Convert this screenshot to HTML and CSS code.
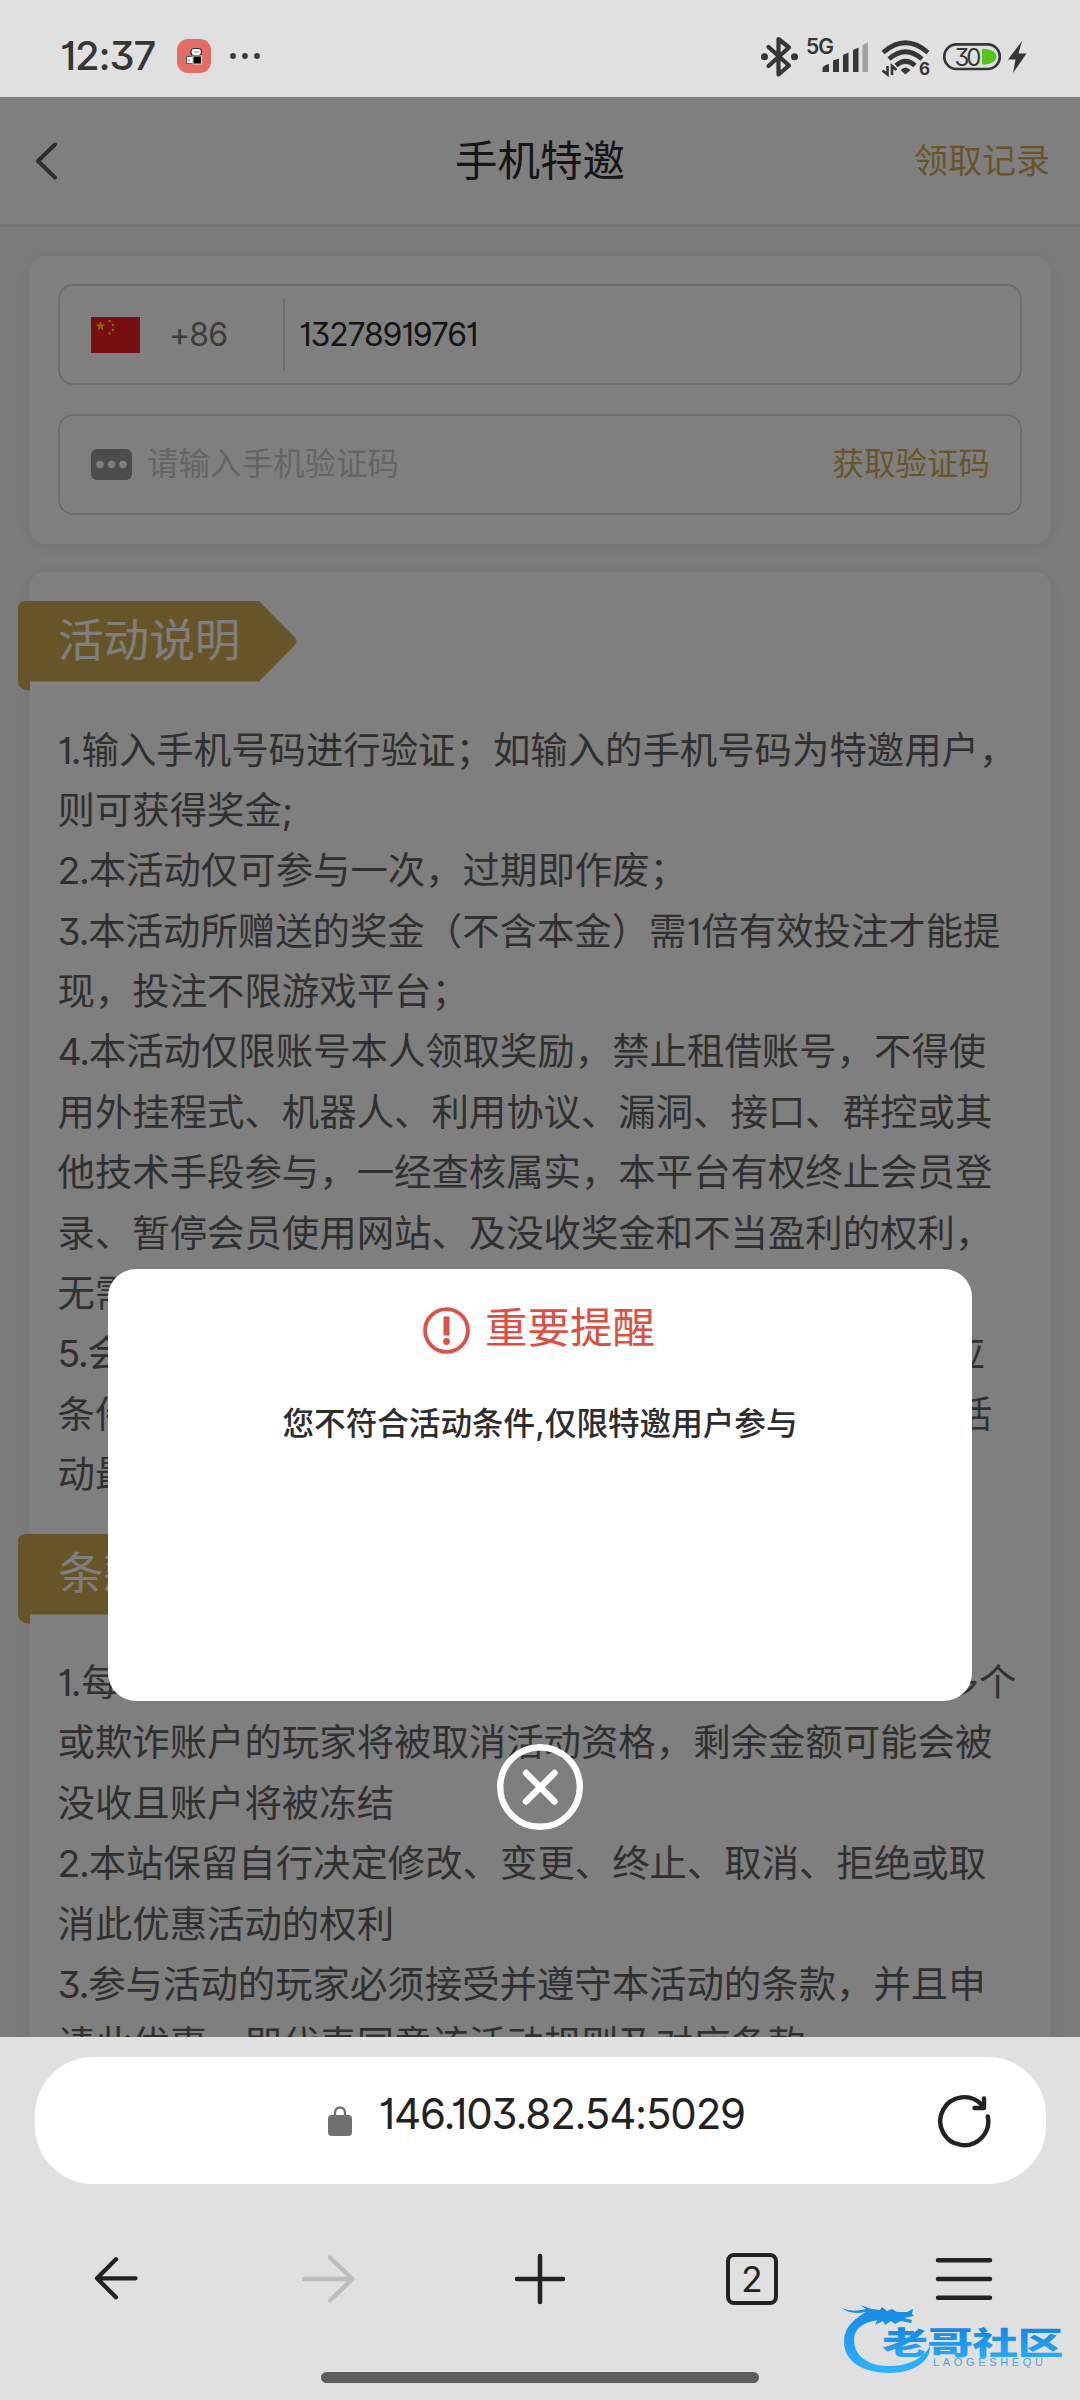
FILE: index.html
```html
<!DOCTYPE html>
<html lang="zh-CN">
<head>
<meta charset="utf-8">
<title>手机特邀</title>
<link rel="stylesheet" href="styles.css">
</head>
<body>
<div class="phone">
  <header class="status">
    <span class="clock">12:37</span>
    <svg class="app-icon" width="34" height="34" viewBox="0 0 34 34">
      <rect width="34" height="34" rx="11" fill="#e36c66"/>
      <rect x="14" y="9.500" width="10.500" height="7" rx="3" fill="#fff" stroke="#333" stroke-width="1.200"/>
      <rect x="9.500" y="17.500" width="6.500" height="7" fill="#fff" stroke="#444" stroke-width=".8"/>
      <rect x="16" y="17" width="8.500" height="8" fill="#000" stroke="#fff" stroke-width=".8"/>
      <path d="M17 13h5M12 20v3" stroke="#888" stroke-width="1.200"/>
    </svg>
    <svg class="more-dots" width="32" height="8" viewBox="0 0 32 8" fill="#3a3a3a"><circle cx="4" cy="4" r="2.900"/><circle cx="16" cy="4" r="2.900"/><circle cx="28" cy="4" r="2.900"/></svg>
    <svg class="status-icons" width="280" height="50" viewBox="756 30 280 50">
      <path d="M768.500 46l20.500 18.500-10.500 9V38l10.500 8.500L768.500 65" fill="none" stroke="#363636" stroke-width="4.200" stroke-linejoin="round" stroke-linecap="round"/>
      <circle cx="764.500" cy="55.700" r="3.500" fill="#363636"/><circle cx="794.500" cy="55.700" r="3.500" fill="#363636"/>
      <text class="net" x="806" y="53" textLength="28">5G</text>
      <g fill="#363636"><path d="M822.500 71v-3.500q0-3 6.500-4.500v8zM833 71V59.500l6-2V71zM843 71V54l5.500-2.500V71zM853 71V49l5.500-2.500V71z"/></g>
      <path d="M862.500 71V44l5.500-2.500V71z" fill="#a0a0a0"/>
      <g fill="none" stroke="#363636" stroke-width="4.600"><path d="M883 51.500q22.500-19.500 45 0M889 58q16.500-14.500 33 0M896 64.500q9.500-8.500 19 0"/></g>
      <path d="M900.500 69q5-5 10 0l-5 4.500z" fill="#363636"/>
      <path d="M887.500 65v8.500l-5-4M892 74v-9l4.500 4" fill="none" stroke="#363636" stroke-width="2.600"/>
      <text class="wifi-gen" x="919" y="74">6</text>
      <path d="M982 48h4.500q10 2 10 7.700t-10 7.700H982z" fill="#52c41a"/>
      <rect x="944.300" y="43.300" width="55.500" height="24.700" rx="12.300" fill="none" stroke="#363636" stroke-width="2.700"/>
      <text class="battery" x="954.500" y="64.500" textLength="27">30</text>
      <path d="M1022 40l-14 18.500h7.500L1013 72l13.500-19.500h-8z" fill="#363636"/>
    </svg>
  </header>

  <main class="viewport">
    <nav class="titlebar">
      <svg class="back" width="24" height="38" viewBox="0 0 24 38"><path d="M20 2.500L3 19l17 16.500" fill="none" stroke="#5a5a5a" stroke-width="4" stroke-linecap="round" stroke-linejoin="round"/></svg>
      <h1>手机特邀</h1>
      <a class="records">领取记录</a>
    </nav>

    <section class="card form">
      <div class="field">
        <svg class="flag" width="49" height="36" viewBox="0 0 49 36">
          <rect width="49" height="36" fill="#ee1c25"/>
          <g fill="#ffde00"><path d="M9.500 4l1.200 3.600h3.800l-3.100 2.200 1.200 3.700-3.100-2.300-3.100 2.300 1.200-3.700-3.100-2.200h3.800z"/><circle cx="18.500" cy="4" r="1.300"/><circle cx="22" cy="8" r="1.300"/><circle cx="22" cy="13" r="1.300"/><circle cx="18.500" cy="16.500" r="1.300"/></g>
        </svg>
        <span class="code">+86</span>
        <span class="divider"></span>
        <span class="number">13278919761</span>
      </div>
      <div class="field">
        <svg class="sms" width="41" height="31" viewBox="0 0 41 31"><rect width="41" height="31" rx="6" fill="#999"/><g fill="#fff"><circle cx="9" cy="15.500" r="3.700"/><circle cx="20.500" cy="15.500" r="3.700"/><circle cx="32" cy="15.500" r="3.700"/></g></svg>
        <span class="placeholder">请输入手机验证码</span>
        <a class="get-code">获取验证码</a>
      </div>
    </section>

    <section class="card info">
      <div class="ribbon">
        <svg width="280" height="90" viewBox="0 0 280 90"><path d="M8 0H241L277 36.500Q280 40.300 277 44L241 80.500H12V89.500H10Q0 88 0 80V8Q0 0 8 0Z" fill="#cfab52"/></svg>
        <h2>活动说明</h2>
      </div>
      <div class="rules">
        <p>1.输入手机号码进行验证；如输入的手机号码为特邀用户，</p>
        <p>则可获得奖金;</p>
        <p><span class="n">2.</span>本活动仅可参与一次，过期即作废；</p>
        <p><span class="n">3.</span>本活动所赠送的奖金（不含本金）需1倍有效投注才能提</p>
        <p>现，投注不限游戏平台；</p>
        <p><span class="n">4.</span>本活动仅限账号本人领取奖励，禁止租借账号，不得使</p>
        <p>用外挂程式、机器人、利用协议、漏洞、接口、群控或其</p>
        <p>他技术手段参与，一经查核属实，本平台有权终止会员登</p>
        <p>录、暂停会员使用网站、及没收奖金和不当盈利的权利，</p>
        <p>无需另行通知；</p>
        <p><span class="n">5.</span>会员参与本活动即视为已阅读并同意本活动规则及对应</p>
        <p>条件与条款，本平台保留随时修改变更或终止本次优惠活</p>
        <p>动最终解释权</p>
      </div>
      <div class="ribbon">
        <svg width="280" height="90" viewBox="0 0 280 90"><path d="M8 0H241L277 36.500Q280 40.300 277 44L241 80.500H12V89.500H10Q0 88 0 80V8Q0 0 8 0Z" fill="#cfab52"/></svg>
        <h2>条款规则</h2>
      </div>
      <div class="rules">
        <p>1.每位玩家每户每个电子地址，只可以参加一次，拥有多个</p>
        <p>或欺诈账户的玩家将被取消活动资格，剩余金额可能会被</p>
        <p>没收且账户将被冻结</p>
        <p><span class="n">2.</span>本站保留自行决定修改、变更、终止、取消、拒绝或取</p>
        <p>消此优惠活动的权利</p>
        <p><span class="n">3.</span>参与活动的玩家必须接受并遵守本活动的条款，并且申</p>
        <p>请此优惠，即代表同意该活动规则及对应条款</p>
      </div>
    </section>

    <div class="overlay">
      <div class="modal">
        <div class="modal-title">
          <svg width="47" height="47" viewBox="0 0 47 47"><circle cx="23.500" cy="23.500" r="21.400" fill="none" stroke="#d9534a" stroke-width="3.900"/><path d="M20.500 9.500h6v19h-6z" fill="#d9534a"/><circle cx="23.500" cy="34.500" r="3.400" fill="#d9534a"/></svg>
          <span>重要提醒</span>
        </div>
        <p class="message">您不符合活动条件,仅限特邀用户参与</p>
      </div>
      <svg class="close" width="86" height="86" viewBox="0 0 86 86" fill="none" stroke="#fff"><circle cx="43" cy="43" r="39.800" stroke-width="6.400"/><path d="M29 29l28.500 28.500M57.500 29L29 57.500" stroke-width="6.400" stroke-linecap="round"/></svg>
    </div>
  </main>

  <footer class="browser">
    <div class="address">
      <svg class="lock" width="24" height="30" viewBox="0 0 24 30"><rect y="9" width="24" height="21" rx="4" fill="#707070"/><path d="M7 11V6.500a5 5 0 0 1 10 0V11" fill="none" stroke="#707070" stroke-width="2.400"/></svg>
      <span class="url">146.103.82.54:5029</span>
      <svg class="reload" width="56" height="56" viewBox="0 0 56 56" fill="none" stroke="#222" stroke-width="4.400" stroke-linecap="round" stroke-linejoin="round"><path d="M51.800 24.500A24 24 0 1 1 46 13"/><path d="M48 6.500V16h-9.500"/></svg>
    </div>
    <div class="tools">
      <svg width="60" height="60" viewBox="0 0 60 60" fill="none" stroke="#222" stroke-width="4.300" stroke-linecap="round" stroke-linejoin="round"><path d="M49.500 29.300H11M30 10.300L11 29.300l19 19"/></svg>
      <svg width="60" height="60" viewBox="0 0 60 60" fill="none" stroke="#bdbdbd" stroke-width="4.300" stroke-linecap="round" stroke-linejoin="round"><path d="M6 30h48M32 8.500L54.500 30 32 51.500"/></svg>
      <svg width="60" height="60" viewBox="0 0 60 60" fill="none" stroke="#222" stroke-width="4.500" stroke-linecap="round"><path d="M7 30h46M30 7v46"/></svg>
      <div class="tab-slot"><span class="tabs">2</span></div>
      <svg width="60" height="60" viewBox="0 0 60 60" fill="none" stroke="#222" stroke-width="4.500" stroke-linecap="round"><path d="M4 11.200h52M4 30h52M4 48.800h52"/></svg>
    </div>
    <div class="home"></div>
  </footer>

  <svg class="watermark" width="230" height="74" viewBox="838 2302 230 74">
    <defs><linearGradient id="blue" gradientUnits="userSpaceOnUse" x1="0" y1="2305" x2="0" y2="2372"><stop offset="0" stop-color="#1687df"/><stop offset="1" stop-color="#2fb2fb"/></linearGradient>
    <linearGradient id="blueText" x1="0" y1="0" x2="0" y2="1"><stop offset=".1" stop-color="#1380dc"/><stop offset="1" stop-color="#2caef8"/></linearGradient></defs>
    <g fill="url(#blue)">
      <path d="M873 2311C852 2317 844 2329 844 2342C844 2362 864 2373 889 2373C912 2373 931 2362 930 2346C924 2358 909 2366 889 2366C868 2366 854 2356 854 2340C854 2329 862 2323 877 2320Z"/>
      <path d="M842 2308Q852 2313 866 2309L860 2305L872 2309L880 2310L882 2307L887 2311L892 2309L897 2312L907 2312L913 2309L912 2314L914 2316L904 2318L912 2320L911 2323L901 2321L895 2324L891 2321L885 2325L883 2321L875 2325L877 2320L864 2323L869 2316L858 2317L866 2312Q850 2315 842 2308Z"/>
    </g>
    <text class="brand" transform="translate(882 2353.500) scale(1.48 1)" textLength="122.500">老哥社区</text>
    <text class="brand-sub" x="933" y="2366" textLength="110">LAOGESHEQU</text>
  </svg>
</div>
</body>
</html>
```
FILE: styles.css
```css
* { box-sizing: border-box; margin: 0; padding: 0; }
body {
  width: 1080px;
  font-family: Inter, "Noto Sans CJK SC", sans-serif;
  font-feature-settings: "cv01", "cv09";
  color: #333;
  background: #e0e0e0;
}
svg { display: block; flex: none; }
.phone { position: relative; width: 1080px; height: 2400px; overflow: hidden; display: flex; flex-direction: column; }

.status { height: 97px; flex: none; display: flex; align-items: center; padding: 14px 44px 0 60px; background: #e0e0e0; }
.clock { width: 117px; font-size: 40px; font-weight: 500; line-height: 48px; letter-spacing: -1.2px; color: #363636; }
.more-dots { margin-left: 18px; }
.status-icons { margin-left: auto; }
.net { font-size: 21px; font-weight: 600; fill: #363636; }
.wifi-gen { font-size: 17px; font-weight: 700; fill: #363636; }
.battery { font-size: 24px; fill: #363636; }

.viewport { position: relative; height: 1940px; flex: none; overflow: hidden; background: #f6f6f6; }
.titlebar { height: 130px; display: flex; align-items: center; justify-content: space-between; padding: 0 30px 0 35px; background: #fff; border-bottom: 3px solid #e2e2e2; }
.titlebar h1 { margin-left: 107px; font-size: 42.5px; font-weight: 400; line-height: 60px; color: #2a2a2a; }
.records { font-size: 34px; line-height: 50px; color: #cfab52; }

.card { width: 1022px; margin: 0 29px; background: #fff; border-radius: 16px; box-shadow: 0 2px 16px rgba(0, 0, 0, .08); }
.form { margin-top: 29px; height: 288px; padding: 28px 29px; display: flex; flex-direction: column; gap: 29px; }
.field { height: 101px; display: flex; align-items: center; padding: 0 31px; border: 2px solid #d8d8d8; border-radius: 15px; }
.code { width: 114px; margin-left: 29px; font-size: 32px; letter-spacing: -.8px; color: #787878; }
.divider { width: 2px; height: 72px; background: #dadada; }
.number { margin-left: 14px; font-size: 32px; letter-spacing: -1.2px; color: #2a2a2a; }
.placeholder { margin: -7px 0 0 15px; font-size: 31.5px; color: #c8c8c8; }
.get-code { margin: -7px -1px 0 auto; font-size: 31.5px; color: #cfab52; }

.info { margin-top: 28px; height: 1600px; padding-top: 29px; }
.ribbon { position: relative; height: 80px; margin-left: -11px; }
.ribbon svg { position: absolute; left: 0; top: 0; }
.ribbon h2 { position: relative; padding-left: 40px; font-size: 45.6px; font-weight: 400; line-height: 80px; color: #fff; }
.rules { padding: 39.5px 0 28px 28.5px; font-size: 37.4px; line-height: 60.4px; color: #606060; }
.rules p { height: 60.4px; white-space: nowrap; }
.n { letter-spacing: -1.2px; }

.overlay { position: absolute; inset: 0; display: flex; flex-direction: column; align-items: center; padding-top: 1172px; background: rgba(0, 0, 0, .5); }
.modal { width: 864px; height: 432px; padding-top: 28px; border-radius: 28px; background: #fff; }
.modal-title { height: 62px; display: flex; align-items: center; justify-content: center; gap: 15px; margin-left: -2px; color: #dd4f43; font-size: 42.5px; line-height: 60px; }
.modal-title svg { margin-top: 4px; }
.message { margin-top: 41px; text-align: center; font-size: 31.6px; line-height: 48px; font-weight: 500; color: #2d2d2d; }
.close { margin-top: 43px; }

.browser { flex: 1; background: #e0e0e0; display: flex; flex-direction: column; align-items: center; }
.address { position: relative; width: 1011px; height: 127px; margin-top: 20px; display: flex; align-items: center; padding: 0 54px 0 293px; border-radius: 58px; background: #fff; }
.url { margin: -14px 0 0 27px; font-size: 42px; letter-spacing: -1.2px; color: #222; white-space: nowrap; }
.reload { margin: -2px 0 0 auto; }
.tools { width: 100%; height: 60px; margin-top: 65px; display: grid; grid-template-columns: repeat(5, 212px); justify-content: center; justify-items: center; }
.tab-slot { display: flex; align-items: center; height: 60px; }
.tabs { width: 52px; height: 52px; border: 4px solid #222; border-radius: 8px; font-size: 35px; line-height: 44px; text-align: center; color: #222; }
.home { width: 438px; height: 11px; margin-top: 63px; border-radius: 6px; background: #5e5e5e; }

.watermark { position: absolute; left: 838px; top: 2302px; }
.brand { font-family: "Noto Sans CJK SC", sans-serif; font-size: 31px; font-weight: 900; fill: url(#blueText); }
.brand-sub { font-family: "Liberation Sans", sans-serif; font-size: 11px; fill: #4ba3e0; }
```
